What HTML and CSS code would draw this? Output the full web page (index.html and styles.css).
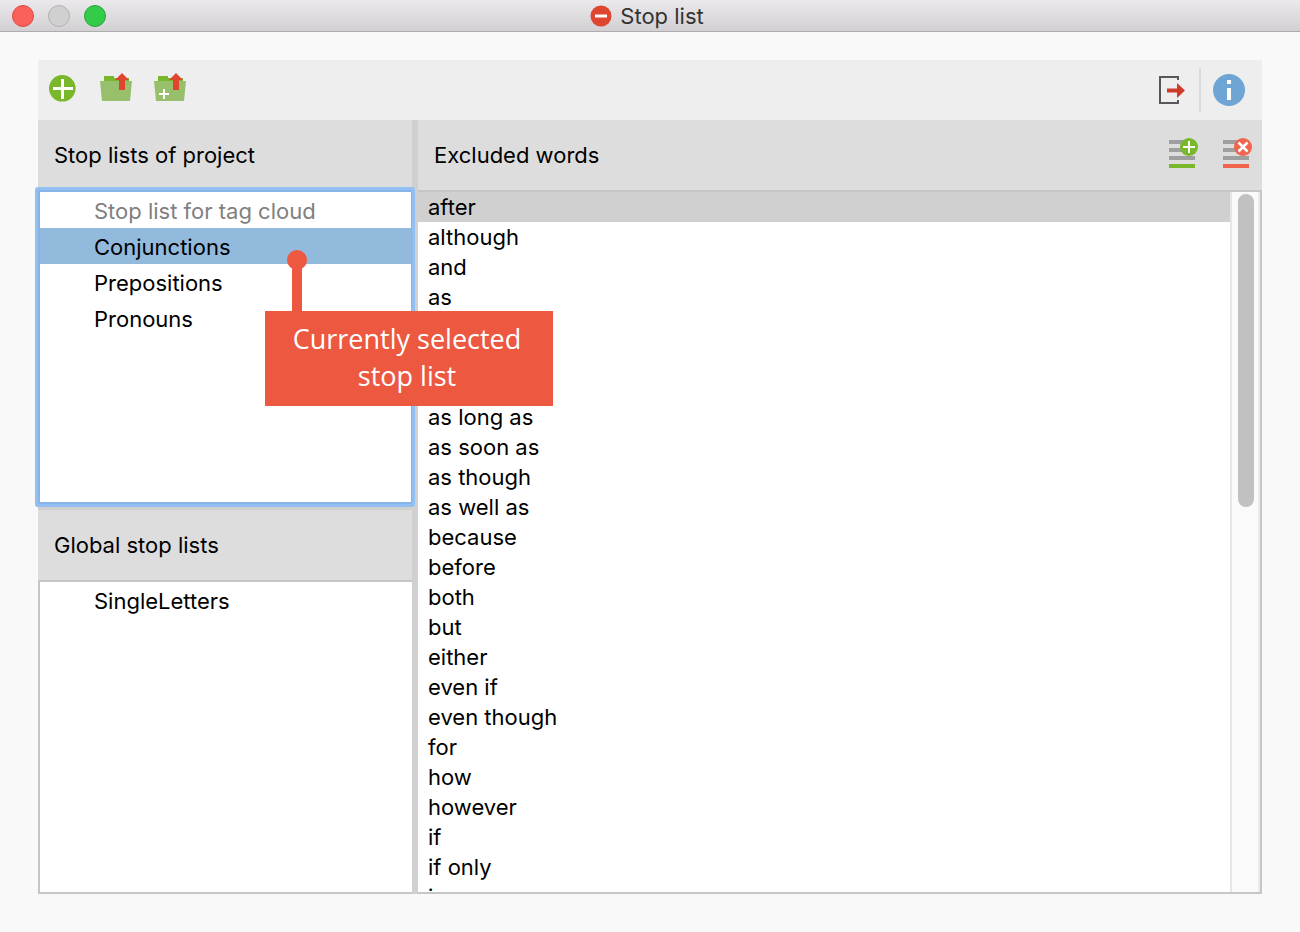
FILE: index.html
```html
<!DOCTYPE html>
<html lang="en">
<head>
<meta charset="UTF-8">
<meta name="viewport" content="width=device-width, initial-scale=1.0">
<title>Stop list</title>
<link rel="stylesheet" href="styles.css">
</head>
<body>
  <!-- ---------- TITLE BAR ---------- -->
  <header class="titlebar">
    <div class="lights">
      <button class="light close" aria-label="Close"></button>
      <button class="light minimize" aria-label="Minimize" disabled></button>
      <button class="light maximize" aria-label="Zoom"></button>
    </div>
    <h1>
      <svg width="22" height="22" viewBox="0 0 22 22"><circle cx="11" cy="11" r="10.5" fill="#de4630"/><path fill="#fff" d="M5 9.5h12v3H5z"/></svg>
      Stop list
    </h1>
  </header>

  <main>
    <!-- ---------- TOOLBAR ---------- -->
    <div class="toolbar">
      <button class="tool" aria-label="New stop list">
        <svg width="30" height="32" viewBox="0 0 30 32"><circle cx="14.300" cy="14.300" r="13.300" fill="#78b82a"/><path fill="#fff" d="M13 5h3v8h9v3h-9v9h-3v-9H5v-3h8z"/></svg>
      </button>
      <button class="tool" aria-label="Import stop lists">
        <svg width="32" height="34" viewBox="0 2 32 34"><path fill="#78b82a" d="M4 5h10v2h15v5H4z"/><path fill="#98c06c" d="M0 10h32l-2 20H2z"/><path fill="#de4630" d="M22 2l7 7h-4v10h-6V9h-4z"/></svg>
      </button>
      <button class="tool" aria-label="Import into list">
        <svg width="32" height="34" viewBox="0 2 32 34"><path fill="#78b82a" d="M4 5h10v2h15v5H4z"/><path fill="#98c06c" d="M0 10h32l-2 20H2z"/><path fill="#de4630" d="M22 2l7 7h-4v10h-6V9h-4z"/><path fill="#fff" d="M9 18h2v4h4v2h-4v4H9v-4H5v-2h4z"/></svg>
      </button>
      <span class="spacer"></span>
      <button class="tool" aria-label="Export">
        <svg width="29" height="32" viewBox="0 0 29 32"><path fill="none" stroke="#58585a" stroke-width="2" d="M20 6V3H2v26h18v-3"/><path fill="#d03a28" d="M9 14.500h10V9l8 7.500-8 7.500v-5.500H9z"/></svg>
      </button>
      <span class="divider"></span>
      <button class="tool" aria-label="Info">
        <svg width="32" height="32" viewBox="0 0 32 32"><circle cx="16" cy="16" r="16" fill="#6ea5d5"/><path fill="#fff" d="M14 6h4v4h-4zM14 14h4v12h-4z"/></svg>
      </button>
    </div>

    <div class="panes">
      <!-- ---------- STOP LISTS ---------- -->
      <div class="left">
        <section class="pane">
          <div class="pane-head"><h2>Stop lists of project</h2></div>
          <ul class="list lists focused">
            <li><button class="muted">Stop list for tag cloud</button></li>
            <li><button class="selected">Conjunctions</button></li>
            <li><button>Prepositions</button></li>
            <li><button>Pronouns</button></li>
          </ul>
        </section>
        <section class="pane">
          <div class="pane-head"><h2>Global stop lists</h2></div>
          <ul class="list lists">
            <li><button>SingleLetters</button></li>
          </ul>
        </section>
        <!-- Callout on the selected row -->
        <div class="callout">Currently selected<br>stop list</div>
      </div>

      <!-- ---------- WORDS ---------- -->
      <section class="pane right">
        <div class="pane-head">
          <h2>Excluded words</h2>
          <button class="tool" aria-label="Add word">
            <svg width="30" height="36" viewBox="0 0 30 36"><path fill="#9f9f9f" d="M0 3h26v4H0zM0 11h26v4H0zM0 19h26v4H0z"/><path fill="#78b82a" d="M0 27h26v4H0z"/><circle cx="20" cy="10" r="9" fill="#78b82a"/><path fill="#fff" d="M19 4h2v5h5v2h-5v5h-2v-5h-5V9h5z"/></svg>
          </button>
          <button class="tool" aria-label="Remove word">
            <svg width="30" height="36" viewBox="0 0 30 36"><path fill="#9f9f9f" d="M0 3h26v4H0zM0 11h26v4H0zM0 19h26v4H0z"/><path fill="#f1644d" d="M0 27h26v4H0z"/><circle cx="20" cy="10" r="9" fill="#f1644d"/><path stroke="#fff" stroke-width="2.500" d="M15.500 5.500l9 9m0-9l-9 9"/></svg>
          </button>
        </div>
        <div class="words-wrap">
          <ul class="list words">
            <li><button class="selected">after</button></li>
            <li><button>although</button></li>
            <li><button>and</button></li>
            <li><button>as</button></li>
            <li></li>
            <li></li>
            <li></li>
            <li><button>as long as</button></li>
            <li><button>as soon as</button></li>
            <li><button>as though</button></li>
            <li><button>as well as</button></li>
            <li><button>because</button></li>
            <li><button>before</button></li>
            <li><button>both</button></li>
            <li><button>but</button></li>
            <li><button>either</button></li>
            <li><button>even if</button></li>
            <li><button>even though</button></li>
            <li><button>for</button></li>
            <li><button>how</button></li>
            <li><button>however</button></li>
            <li><button>if</button></li>
            <li><button>if only</button></li>
            <li><button>in case</button></li>
          </ul>
          <div class="scrollbar"><div class="thumb"></div></div>
        </div>
      </section>
    </div>
  </main>
</body>
</html>
```
FILE: styles.css
```css
:root{
  --head:#dddddd;
  --line:#c6c6c6;
  --split:#d0d0d0;
  --callout:#ec5840;
}
*{box-sizing:border-box;margin:0;padding:0;}
body{
  font-family:Inter,Roboto,"Liberation Sans",sans-serif;
  font-size:22px;color:#000;background:#f9f9f9;
  height:100vh;display:flex;flex-direction:column;overflow:hidden;
}
button{font:inherit;color:inherit;background:none;border:none;text-align:left;}
ul{list-style:none;}
svg{display:block;}

/* ---------- TITLE BAR ---------- */
.titlebar{
  display:grid;grid-template-columns:1fr auto 1fr;align-items:center;
  height:32px;padding:0 12px;
  background:linear-gradient(#ebe9eb,#d2d0d2);border-bottom:1px solid #adabad;
}
.lights{display:flex;gap:14px;}
.light{width:22px;height:22px;border-radius:50%;border:1px solid;}
.close{background:#fc605b;border-color:#e2463f;}
.minimize{background:#d0d0d0;border-color:#b2b2b2;}
.maximize{background:#34cb49;border-color:#1fa833;}
h1{
  display:flex;align-items:center;gap:8px;padding-right:6px;
  font-size:22px;line-height:28px;font-weight:400;color:#333;
}

/* ---------- TOOLBAR ---------- */
main{flex:1;min-height:0;display:flex;flex-direction:column;padding:28px 38px 38px;}
.toolbar{
  display:flex;align-items:center;gap:22px;
  height:60px;padding:0 17px 0 10px;background:#eeeeee;
}
.spacer{flex:1;}
.toolbar .divider{width:2px;height:44px;background:#dcdcdc;margin:0 -10px;}

/* ---------- PANES ---------- */
.panes{
  flex:1;min-height:0;display:grid;grid-template-columns:374fr 844fr;gap:6px;
  background:var(--split);
}
.left{position:relative;display:flex;flex-direction:column;gap:6px;min-height:0;}
.pane{flex:1;min-width:0;min-height:0;display:flex;flex-direction:column;}
.pane-head{
  display:flex;align-items:center;gap:24px;flex:none;
  height:70px;padding:0 9px 0 16px;background:var(--head);
}
h2{flex:1;font-size:22px;line-height:28px;font-weight:400;}
.list{flex:1;min-height:0;background:#fff;overflow:hidden;}
.list button{display:block;width:100%;white-space:nowrap;}
.lists{border:2px solid var(--line);border-right:none;}
.lists button{line-height:34px;padding:2px 54px 0;}
.lists .selected{background:#92badd;}
.focused{
  z-index:1;border:2px solid #86b4e8;border-right:1px solid #86b4e8;
  box-shadow:0 0 0 3px #93c0f2;border-radius:1px;
}
.muted{color:#808080;}
.words-wrap{
  flex:1;min-height:0;display:flex;
  border:2px solid var(--line);border-left:none;
}
.words li{height:30px;}
.words button{line-height:30px;padding:0 10px;}
.words .selected{background:#d0d0d0;}
.scrollbar{
  width:30px;padding:2px 4px 2px 6px;background:#fafafa;
  border-left:2px solid #e6e6e6;border-right:2px solid #ececec;
}
.thumb{height:45%;border-radius:8px;background:#c1c1c1;}

/* ---------- CALLOUT ---------- */
.callout{
  position:absolute;z-index:2;left:227px;top:191px;width:288px;padding:9px 4px 12px 0;
  background:var(--callout);color:#fff;text-align:center;
  font-family:"Open Sans","Noto Sans",sans-serif;font-size:27px;line-height:37px;
}
.callout::before{
  content:"";position:absolute;left:27px;bottom:100%;
  width:10px;height:52px;background:var(--callout);
}
.callout::after{
  content:"";position:absolute;left:22px;top:-61px;
  width:20px;height:20px;border-radius:50%;background:var(--callout);
}
```
